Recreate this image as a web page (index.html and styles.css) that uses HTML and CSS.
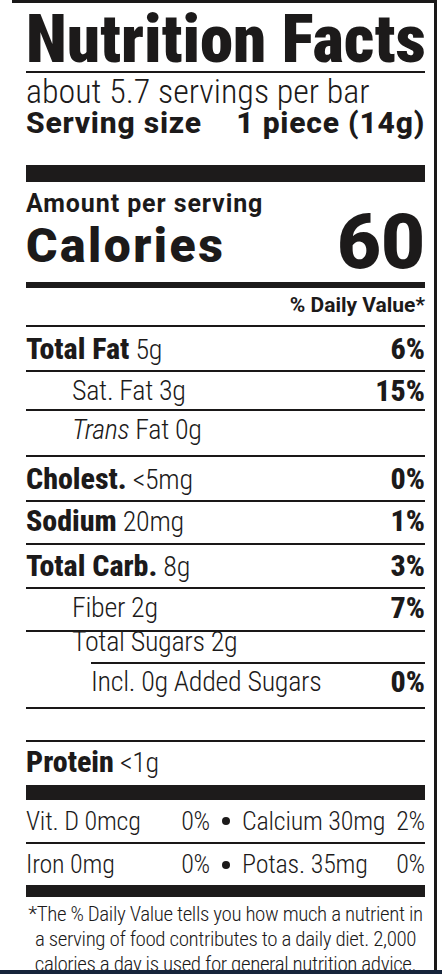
FILE: index.html
```html
<!DOCTYPE html>
<html lang="en">

<head>
	<meta charset="UTF-8">
	<meta name="viewport" content="width=device-width, initial-scale=1.0">
	<title>Nutrition Facts</title>
	<link rel="stylesheet" href="styles.css">
</head>

<body>

	<div class="label">
		<h1 class="title">Nutrition Facts</h1>

		<div class="servings">
			<div class="servings-per">about 5.7 servings per bar</div>
			<div class="serving-size">
				<span>Serving size</span>
				<span>1 piece (14g)</span>
			</div>
		</div>

		<div class="bar bar--top"></div>

		<div class="amount">Amount per serving</div>
		<div class="calories">
			<span class="calories__label">Calories</span>
			<span class="calories__value">60</span>
		</div>

		<div class="bar bar--mid"></div>

		<div class="dv-head">% Daily Value*</div>

		<div class="row row--fat">
			<span><b class="nutrient">Total Fat</b> 5g</span>
			<b class="pct">6%</b>
		</div>
		<div class="row row--sat">
			<span class="indent">Sat. Fat 3g</span>
			<b class="pct">15%</b>
		</div>
		<div class="row row--trans">
			<span class="indent"><i>Trans</i> Fat 0g</span>
		</div>
		<div class="row row--chol">
			<span><b class="nutrient">Cholest.</b> &lt;5mg</span>
			<b class="pct">0%</b>
		</div>
		<div class="row row--sodium">
			<span><b class="nutrient">Sodium</b> 20mg</span>
			<b class="pct">1%</b>
		</div>
		<div class="row row--carb">
			<span><b class="nutrient">Total Carb.</b> 8g</span>
			<b class="pct">3%</b>
		</div>
		<div class="row row--fiber">
			<span class="indent">Fiber 2g</span>
			<b class="pct">7%</b>
		</div>
		<div class="row row--sugars">
			<span class="indent">Total Sugars 2g</span>
		</div>
		<div class="row row--added">
			<span>Incl. 0g Added Sugars</span>
			<b class="pct">0%</b>
		</div>
		<div class="row row--empty"></div>
		<div class="row row--protein">
			<span><b class="nutrient">Protein</b> &lt;1g</span>
		</div>

		<div class="bar bar--low"></div>

		<div class="micro micro--first">
			<div class="micro__cell"><span>Vit. D 0mcg</span><span>0%</span></div>
			<div class="micro__dot"></div>
			<div class="micro__cell"><span>Calcium 30mg</span><span>2%</span></div>
		</div>
		<div class="micro">
			<div class="micro__cell"><span>Iron 0mg</span><span>0%</span></div>
			<div class="micro__dot"></div>
			<div class="micro__cell"><span>Potas. 35mg</span><span>0%</span></div>
		</div>

		<div class="bar bar--end"></div>

		<p class="footnote">*The % Daily Value tells you how much a nutrient in<br>a serving of food contributes to a daily diet. 2,000<br>calories a day is used for general nutrition advice.</p>
	</div>

	<div class="screen-edge"></div>

</body>

</html>
```
FILE: styles.css
```css
body {
	margin: 0;
	height: 974px;
	overflow: hidden;
	background-color: #ffffff;
	color: #1c1a1a;
	font-family: "Roboto", "Liberation Sans", sans-serif;
	font-stretch: 75%;
}

/* label frame: only top and right edge are visible in the photo */
.label {
	margin-left: 12px;
	width: 399px;
	min-height: 971px;
	padding: 0 9px 0 14px;
	border-top: 3px solid #1a1818;
	border-right: 3px solid #1a1818;
}

.title {
	margin: 0;
	padding-top: 4px;
	font-size: 67px;
	font-weight: 900;
	line-height: 64px;
	white-space: nowrap;
	border-bottom: 2px solid #1a1818;
}

.servings {
	padding-top: 2px;
	padding-bottom: 26px;
}

.servings-per {
	height: 32px;
	font-size: 34px;
	font-weight: 300;
	line-height: 32px;
	white-space: nowrap;
}

.serving-size {
	display: flex;
	justify-content: space-between;
	height: 32px;
	font-size: 30px;
	font-weight: 800;
	font-stretch: 100%;
	letter-spacing: 0.8px;
	line-height: 32px;
	white-space: nowrap;
}

.bar {
	background-color: #1d1b1b;
}

.bar--top {
	height: 17px;
}

.bar--mid {
	height: 6px;
	margin-top: 14px;
}

.bar--low {
	height: 15px;
}

.bar--end {
	height: 12px;
}

.amount {
	padding-top: 10px;
	height: 24px;
	font-size: 25px;
	font-weight: 700;
	font-stretch: 100%;
	letter-spacing: 0.9px;
	line-height: 24px;
}

.calories {
	display: flex;
	justify-content: space-between;
	align-items: flex-start;
	height: 52px;
	font-weight: 900;
}

.calories__label {
	margin-top: 8px;
	font-size: 48px;
	font-stretch: 100%;
	letter-spacing: 2.5px;
	line-height: 44px;
}

.calories__value {
	font-size: 76px;
	font-stretch: 97%;
	line-height: 52px;
}

.dv-head {
	padding: 5px 0 8px;
	height: 24px;
	font-size: 21px;
	font-weight: 700;
	font-stretch: 95%;
	line-height: 24px;
	text-align: right;
}

/* --- Nutrient rows --- */
.row {
	display: flex;
	justify-content: space-between;
	border-top: 2px solid #1a1818;
	font-size: 28px;
	font-weight: 300;
	letter-spacing: -0.3px;
	white-space: nowrap;
}

.nutrient {
	font-size: 30px;
	font-weight: 800;
	font-stretch: 86%;
	letter-spacing: 0;
}

.pct {
	font-size: 30px;
	font-weight: 800;
	letter-spacing: 0;
}

.indent {
	padding-left: 46px;
}

.row--fat { height: 43px; line-height: 43px; }
.row--sat { height: 37px; line-height: 37px; }
.row--trans { height: 44px; line-height: 38px; }
.row--chol { height: 43px; line-height: 43px; }
.row--sodium { height: 41px; line-height: 37px; }
.row--carb { height: 42px; line-height: 42px; }
.row--fiber { height: 41px; line-height: 38px; }
.row--sugars { height: 30px; line-height: 20px; }

.row--added {
	margin-left: 65px;
	height: 43px;
	line-height: 36px;
}

.row--empty { height: 31px; }
.row--protein { height: 43px; line-height: 40px; }

/* --- Vitamins & minerals --- */
.micro {
	display: grid;
	grid-template-columns: 184px 32px 1fr;
	height: 41px;
	font-size: 26px;
	font-weight: 300;
	letter-spacing: -0.2px;
	line-height: 41px;
	white-space: nowrap;
}

.micro--first {
	height: 42px;
	line-height: 42px;
	border-bottom: 2px solid #1a1818;
}

.micro__cell {
	display: flex;
	justify-content: space-between;
}

.micro__dot {
	display: flex;
	align-items: center;
	justify-content: center;
}

.micro__dot::before {
	content: "";
	width: 8px;
	height: 8px;
	border-radius: 50%;
	background-color: #1c1a1a;
}

.footnote {
	margin: 0;
	padding-top: 5px;
	font-size: 21px;
	font-weight: 300;
	letter-spacing: -0.4px;
	line-height: 25px;
	text-align: center;
	white-space: nowrap;
}

/* dark strip of the device frame at the bottom of the screenshot */
.screen-edge {
	position: fixed;
	left: 0;
	right: 0;
	bottom: 0;
	height: 4px;
	background-color: #16243a;
}
```
